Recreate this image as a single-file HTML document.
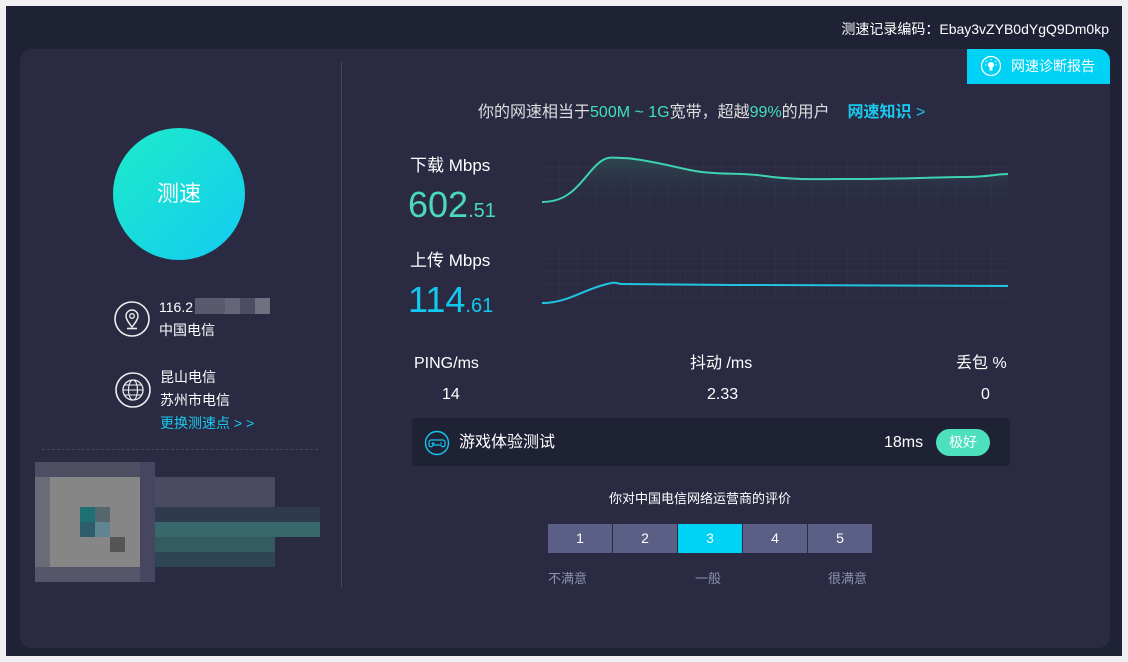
<!DOCTYPE html>
<html><head><meta charset="utf-8"><style>
*{margin:0;padding:0;box-sizing:border-box}
body{width:1128px;height:662px;background:#f0f0f2;position:relative;overflow:hidden;font-family:"Liberation Sans","Noto Sans CJK SC",sans-serif;color:#e8e8ee}
.a{position:absolute;white-space:nowrap;line-height:20px}
#bg{left:6px;top:6px;width:1116px;height:650px;background:#1f2135}
#card{left:20px;top:49px;width:1090px;height:599px;background:#2a2b43;border-radius:12px}
.px{position:absolute}
</style></head><body>
<div class="a" id="bg"></div>
<div class="a" style="right:19px;top:19px;font-size:14px;color:#fff">测速记录编码：Ebay3vZYB0dYgQ9Dm0kp</div>
<div class="a" id="card"></div>
<div class="a" style="left:967px;top:49px;width:143px;height:35px;background:#00d2f5;border-top-right-radius:12px;font-size:14px;color:#fff;line-height:35px;padding-left:44px">网速诊断报告</div>
<svg class="a" style="left:980px;top:55px" width="22" height="22" viewBox="0 0 22 22"><circle cx="11" cy="11" r="9.5" fill="none" stroke="#fff" stroke-width="1.3"/><circle cx="11" cy="10" r="3" fill="#fff"/><rect x="9.5" y="13" width="3" height="2.5" fill="#fff"/><path d="M11 4v1.5M6 6l1 1M16 6l-1 1M5 10h1.5M17 10h-1.5" stroke="#fff" stroke-width="1"/></svg>

<div class="a" style="left:113px;top:128px;width:132px;height:132px;border-radius:50%;background:linear-gradient(135deg,#1debc8,#13cbf2);font-size:22px;color:#fff;text-align:center;line-height:132px">测速</div>

<svg class="a" style="left:113px;top:300px" width="38" height="38" viewBox="0 0 38 38"><circle cx="19" cy="19" r="17" fill="none" stroke="#eee" stroke-width="1.6"/><path d="M19 27c-4-5-6-8-6-11a6 6 0 0 1 12 0c0 3-2 6-6 11z" fill="none" stroke="#eee" stroke-width="1.4"/><circle cx="19" cy="16" r="2.3" fill="none" stroke="#eee" stroke-width="1.3"/><path d="M14 28.5h10" stroke="#eee" stroke-width="1.6"/></svg>
<div class="a" style="left:159px;top:297px;font-size:14px;color:#fff">116.2</div>
<div class="a" style="left:195px;top:298px;width:30px;height:16px;background:#5a5a6e"></div>
<div class="a" style="left:225px;top:298px;width:15px;height:16px;background:#65657a"></div>
<div class="a" style="left:240px;top:298px;width:15px;height:16px;background:#4c4c62"></div>
<div class="a" style="left:255px;top:298px;width:15px;height:16px;background:#70707f"></div>
<div class="a" style="left:159px;top:320px;font-size:14px;color:#fff">中国电信</div>

<svg class="a" style="left:114px;top:371px" width="38" height="38" viewBox="0 0 38 38"><circle cx="19" cy="19" r="17" fill="none" stroke="#eee" stroke-width="1.6"/><circle cx="19" cy="19" r="10" fill="none" stroke="#eee" stroke-width="1.3"/><ellipse cx="19" cy="19" rx="4.5" ry="10" fill="none" stroke="#eee" stroke-width="1.1"/><path d="M9 19h20M10.5 14h17M10.5 24h17" stroke="#eee" stroke-width="1.1"/></svg>
<div class="a" style="left:160px;top:367px;font-size:14px;color:#fff">昆山电信</div>
<div class="a" style="left:160px;top:390px;font-size:14px;color:#fff">苏州市电信</div>
<div class="a" style="left:160px;top:413px;font-size:14px;color:#1ac8ee">更换测速点 &gt; &gt;</div>
<div class="a" style="left:42px;top:449px;width:276px;border-top:1px dashed #44465e"></div>

<div class="a" style="left:35px;top:462px;width:120px;height:120px;background:#6a6a78"></div>
<div class="px" style="left:35px;top:462px;width:120px;height:15px;background:#4e4e62"></div>
<div class="px" style="left:35px;top:567px;width:120px;height:15px;background:#55556a"></div>
<div class="px" style="left:50px;top:477px;width:90px;height:90px;background:#868686"></div>
<div class="px" style="left:80px;top:507px;width:15px;height:15px;background:#1e7075"></div>
<div class="px" style="left:95px;top:507px;width:15px;height:15px;background:#56666e"></div>
<div class="px" style="left:80px;top:522px;width:15px;height:15px;background:#2f5c6c"></div>
<div class="px" style="left:95px;top:522px;width:15px;height:15px;background:#5f8590"></div>
<div class="px" style="left:110px;top:537px;width:15px;height:15px;background:#555"></div>
<div class="px" style="left:140px;top:462px;width:15px;height:120px;background:#464660"></div>
<div class="px" style="left:155px;top:477px;width:120px;height:30px;background:#4a4a60"></div>
<div class="px" style="left:155px;top:507px;width:165px;height:15px;background:#2e3a4e"></div>
<div class="px" style="left:155px;top:522px;width:165px;height:15px;background:#38686c"></div>
<div class="px" style="left:155px;top:537px;width:120px;height:15px;background:#345a62"></div>
<div class="px" style="left:155px;top:552px;width:120px;height:15px;background:#2e4555"></div>

<div class="a" style="left:341px;top:62px;width:1px;height:526px;background:#44465e"></div>

<div class="a" style="left:478px;top:103px;font-size:16px;color:#ddd">你的网速相当于<span style="color:#3fe0bc">500M ~ 1G</span>宽带，超越<span style="color:#3fe0bc">99%</span>的用户 &nbsp; &nbsp;<span style="color:#1ac8ee;font-weight:bold">网速知识</span> <span style="color:#1ac8ee">&gt;</span></div>

<div class="a" style="left:410px;top:156px;font-size:17px;color:#fff">下载 Mbps</div>
<div class="a" style="left:408px;top:187px;font-size:36px;line-height:36px;color:#4ad9bb">602<span style="font-size:20px">.51</span></div>
<div class="a" style="left:410px;top:251px;font-size:17px;color:#fff">上传 Mbps</div>
<div class="a" style="left:408px;top:282px;font-size:36px;line-height:36px;color:#12c8ef">114<span style="font-size:20px">.61</span></div>

<svg class="a" style="left:540px;top:150px" width="470" height="160" viewBox="540 150 470 160">
<defs><pattern id="g" x="542" y="155" width="18" height="13" patternUnits="userSpaceOnUse"><path d="M18 0V13M0 13H18" stroke="#33354c" stroke-width="1" fill="none"/></pattern>
<linearGradient id="f" x1="0" y1="0" x2="0" y2="1"><stop offset="0" stop-color="#2f5a58" stop-opacity=".6"/><stop offset="1" stop-color="#2a2b43" stop-opacity="0"/></linearGradient></defs>
<rect x="542" y="155" width="466" height="52" fill="url(#g)"/>
<rect x="542" y="249" width="466" height="52" fill="url(#g)"/>
<path d="M542 202C565 202 575 190 590 172S610 158 622 158S655 162 685 169S740 172 765 176S820 179 860 179S940 177 965 177S995 174 1008 174V207H542Z" fill="url(#f)"/>
<path d="M542 202C565 202 575 190 590 172S610 158 622 158S655 162 685 169S740 172 765 176S820 179 860 179S940 177 965 177S995 174 1008 174" fill="none" stroke="#3fd2b0" stroke-width="2"/>
<path d="M542 303C565 303 580 292 600 286S615 284 622 284S700 285 760 285S900 286 1008 286" fill="none" stroke="#1fc4e0" stroke-width="2"/>
</svg>

<div class="a" style="left:414px;top:354px;font-size:16px;color:#fff">PING/ms</div>
<div class="a" style="left:442px;top:385px;font-size:16px;color:#fff">14</div>
<div class="a" style="left:690px;top:354px;font-size:16px;color:#fff">抖动 /ms</div>
<div class="a" style="left:707px;top:385px;font-size:16px;color:#fff">2.33</div>
<div class="a" style="left:956px;top:354px;font-size:16px;color:#fff">丢包 %</div>
<div class="a" style="left:981px;top:385px;font-size:16px;color:#fff">0</div>

<div class="a" style="left:412px;top:418px;width:598px;height:48px;background:#1f2135;border-radius:4px"></div>
<svg class="a" style="left:424px;top:430px" width="26" height="26" viewBox="0 0 26 26"><circle cx="13" cy="13" r="11.5" fill="none" stroke="#12c8ef" stroke-width="1.4"/><path d="M7 10h12a2 2 0 0 1 2 2v3a2 2 0 0 1-3 1.5l-1.5-1.5h-7L8 16.5A2 2 0 0 1 5 15v-3a2 2 0 0 1 2-2z" fill="none" stroke="#12c8ef" stroke-width="1.2"/><path d="M9 12v3M7.5 13.5h3M16 13h2" stroke="#12c8ef" stroke-width="1.1"/></svg>
<div class="a" style="left:459px;top:433px;font-size:16px;color:#fff">游戏体验测试</div>
<div class="a" style="left:884px;top:433px;font-size:16px;color:#fff">18ms</div>
<div class="a" style="left:936px;top:429px;width:54px;height:27px;border-radius:14px;background:#4de0bd;color:#fff;font-size:14px;text-align:center;line-height:27px">极好</div>

<div class="a" style="left:609px;top:489px;font-size:13px;color:#fff">你对中国电信网络运营商的评价</div>
<div class="a" style="left:548px;top:524px;width:64px;height:29px;background:#5b5f86;text-align:center;line-height:29px;font-size:14px;color:#fff">1</div>
<div class="a" style="left:613px;top:524px;width:64px;height:29px;background:#5b5f86;text-align:center;line-height:29px;font-size:14px;color:#fff">2</div>
<div class="a" style="left:678px;top:524px;width:64px;height:29px;background:#00d2f5;text-align:center;line-height:29px;font-size:14px;color:#fff">3</div>
<div class="a" style="left:743px;top:524px;width:64px;height:29px;background:#5b5f86;text-align:center;line-height:29px;font-size:14px;color:#fff">4</div>
<div class="a" style="left:808px;top:524px;width:64px;height:29px;background:#5b5f86;text-align:center;line-height:29px;font-size:14px;color:#fff">5</div>
<div class="a" style="left:548px;top:569px;font-size:13px;color:#8a90ad">不满意</div>
<div class="a" style="left:695px;top:569px;font-size:13px;color:#8a90ad">一般</div>
<div class="a" style="left:828px;top:569px;font-size:13px;color:#8a90ad">很满意</div>
</body></html>
